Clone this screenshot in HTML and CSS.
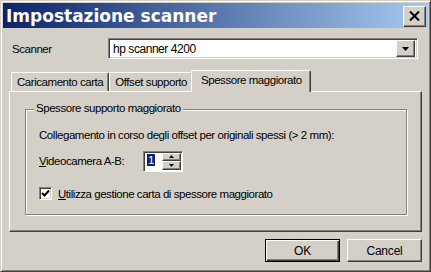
FILE: index.html
```html
<!DOCTYPE html>
<html lang="it">
<head>
  <meta charset="UTF-8">
  <title>Impostazione scanner</title>
  <link rel="stylesheet" href="styles.css">
</head>
<body>

<div class="window">

  <!-- barra del titolo -->
  <div class="titlebar">
    <span class="title">Impostazione scanner</span>
    <button class="close-btn">
      <svg width="11" height="10" viewBox="0 0 11 10">
        <path d="M1 0.5 L10 9.5 M10 0.5 L1 9.5" stroke="#000" stroke-width="2" fill="none"/>
      </svg>
    </button>
  </div>

  <div class="content">

    <div class="scanner-row">
      <span class="label">Scanner</span>
      <div class="combo">
        <span class="combo-text">hp scanner 4200</span>
        <span class="drop-btn">
          <svg width="7" height="4" viewBox="0 0 7 4"><path d="M0 0 H7 L3.5 4 Z" fill="#000"/></svg>
        </span>
      </div>
    </div>

    <div class="tabs">
      <div class="tab first">Caricamento carta</div>
      <div class="tab">Offset supporto</div>
      <div class="tab active">Spessore maggiorato</div>
    </div>

    <div class="panel">
      <div class="group">
        <span class="group-title">Spessore supporto maggiorato</span>
        <div class="line">Collegamento in corso degli offset per originali spessi (&gt; 2 mm):</div>
        <div class="spin-row">
          <span class="spin-label"><u>V</u>ideocamera A-B:</span>
          <div class="spinner">
            <div class="spin-edit"><span class="sel">1</span></div>
            <div class="spin-btns">
              <span class="spin-btn"><svg width="5" height="3" viewBox="0 0 5 3"><path d="M2.5 0 L5 3 H0 Z" fill="#000"/></svg></span>
              <span class="spin-btn"><svg width="5" height="3" viewBox="0 0 5 3"><path d="M0 0 H5 L2.5 3 Z" fill="#000"/></svg></span>
            </div>
          </div>
        </div>
        <div class="check-row">
          <span class="checkbox">
            <svg width="9" height="9" viewBox="0 0 9 9"><path d="M1 4 L3.5 6.5 L8 1.5" stroke="#000" stroke-width="2" fill="none"/></svg>
          </span>
          <span><u>U</u>tilizza gestione carta di spessore maggiorato</span>
        </div>
      </div>
    </div>

    <div class="buttons">
      <button class="btn default">OK</button>
      <button class="btn">Cancel</button>
    </div>

  </div>
</div>

</body>
</html>
```

FILE: styles.css
```css
* { box-sizing: border-box; }
body {
  margin: 0;
  background: #d4d0c8;
  font-family: "Liberation Sans", Arial, sans-serif;
  font-size: 11.5px;
  letter-spacing: -0.45px;
  color: #000;
}
.window {
  width: 431px;
  height: 272px;
  border: 1px solid;
  border-color: #d4d0c8 #404040 #404040 #d4d0c8;
  box-shadow: inset 1px 1px 0 #fff, inset -1px -1px 0 #808080;
  padding: 2px;
  background: #d4d0c8;
  display: flex;
  flex-direction: column;
}
.titlebar {
  height: 25px;
  background: linear-gradient(to right, #0a246a, #a6caf0);
  display: flex;
  align-items: center;
  justify-content: space-between;
  padding: 0 2px 0 3px;
}
.title {
  color: #fff;
  font-family: "DejaVu Sans", Verdana, sans-serif;
  font-weight: bold;
  font-size: 17px;
  letter-spacing: 0;
}
.close-btn, .drop-btn, .spin-btn, .btn {
  background: #d4d0c8;
  border: 1px solid;
  border-color: #fff #404040 #404040 #fff;
  box-shadow: inset -1px -1px 0 #808080;
  padding: 0;
  display: flex;
  align-items: center;
  justify-content: center;
}
.close-btn {
  width: 23px;
  height: 21px;
  margin-top: 1px;
}
.content {
  flex: 1;
  display: flex;
  flex-direction: column;
  padding: 0 6px 0 6px;
}
.scanner-row {
  display: flex;
  align-items: center;
  margin-top: 10px;
  height: 21px;
}
.label {
  width: 99px;
  padding-left: 3px;
}
.combo, .checkbox {
  border: 1px solid;
  border-color: #808080 #fff #fff #808080;
  box-shadow: inset 1px 1px 0 #404040, inset -1px -1px 0 #d4d0c8;
  background: #fff;
}
.combo {
  width: 310px;
  height: 21px;
  display: flex;
  align-items: center;
  justify-content: space-between;
  padding: 2px;
}
.combo-text {
  padding-left: 2px;
  font-size: 12px;
}
.drop-btn {
  width: 19px;
  height: 17px;
}
.tabs {
  display: flex;
  align-items: flex-end;
  margin-top: 11px;
  padding-left: 2px;
  height: 21px;
  position: relative;
  z-index: 1;
}
.tab {
  height: 19px;
  padding: 0 5px 0 5px;
  display: flex;
  align-items: center;
  border: 1px solid;
  border-bottom: none;
  border-color: #fff #404040 transparent #fff;
  box-shadow: inset -1px 0 0 #808080;
  border-radius: 2px 2px 0 0;
}
.tab.active {
  height: 22px;
  margin-left: -2px;
  margin-bottom: -1px;
  padding: 0 8px 3px 9px;
  background: #d4d0c8;
}
.panel {
  height: 141px;
  border: 1px solid;
  border-color: #fff #404040 #404040 #fff;
  box-shadow: inset -1px -1px 0 #808080;
  padding: 17px 14px 0 15px;
}
.group {
  position: relative;
  height: 106px;
  border: 1px solid #808080;
  box-shadow: inset 1px 1px 0 #fff, 1px 1px 0 #fff;
  padding: 19px 13px 0 13px;
}
.group-title {
  position: absolute;
  top: -8px;
  left: 8px;
  padding: 0 2px;
  background: #d4d0c8;
}
.spin-row {
  display: flex;
  align-items: center;
  margin-top: 10px;
  height: 20px;
}
.spin-label {
  width: 104px;
}
.spinner {
  display: flex;
  height: 21px;
  width: 40px;
  background: #fff;
  border: 1px solid;
  border-color: #808080 #fff #fff #808080;
  box-shadow: inset 1px 1px 0 #404040;
}
.spin-edit {
  flex: 1;
  padding: 2px 0 0 3px;
}
.sel {
  background: #0a246a;
  color: #fff;
  padding: 0 1px;
}
.spin-btns {
  width: 20px;
  display: flex;
  flex-direction: column;
  padding: 1px 1px 1px 0;
}
.spin-btn {
  flex: 1;
}
.check-row {
  display: flex;
  align-items: center;
  gap: 6px;
  margin-top: 16px;
}
.checkbox {
  width: 13px;
  height: 13px;
  display: flex;
  align-items: center;
  justify-content: center;
}
.buttons {
  display: flex;
  justify-content: flex-end;
  gap: 7px;
  margin-top: 7px;
}
.btn {
  width: 75px;
  height: 23px;
  font-family: "Liberation Sans", Arial, sans-serif;
  font-size: 12px;
  letter-spacing: -0.2px;
}
.btn.default {
  border: 1px solid #000;
  box-shadow: inset 1px 1px 0 #fff, inset -1px -1px 0 #404040, inset -2px -2px 0 #808080;
}
```
